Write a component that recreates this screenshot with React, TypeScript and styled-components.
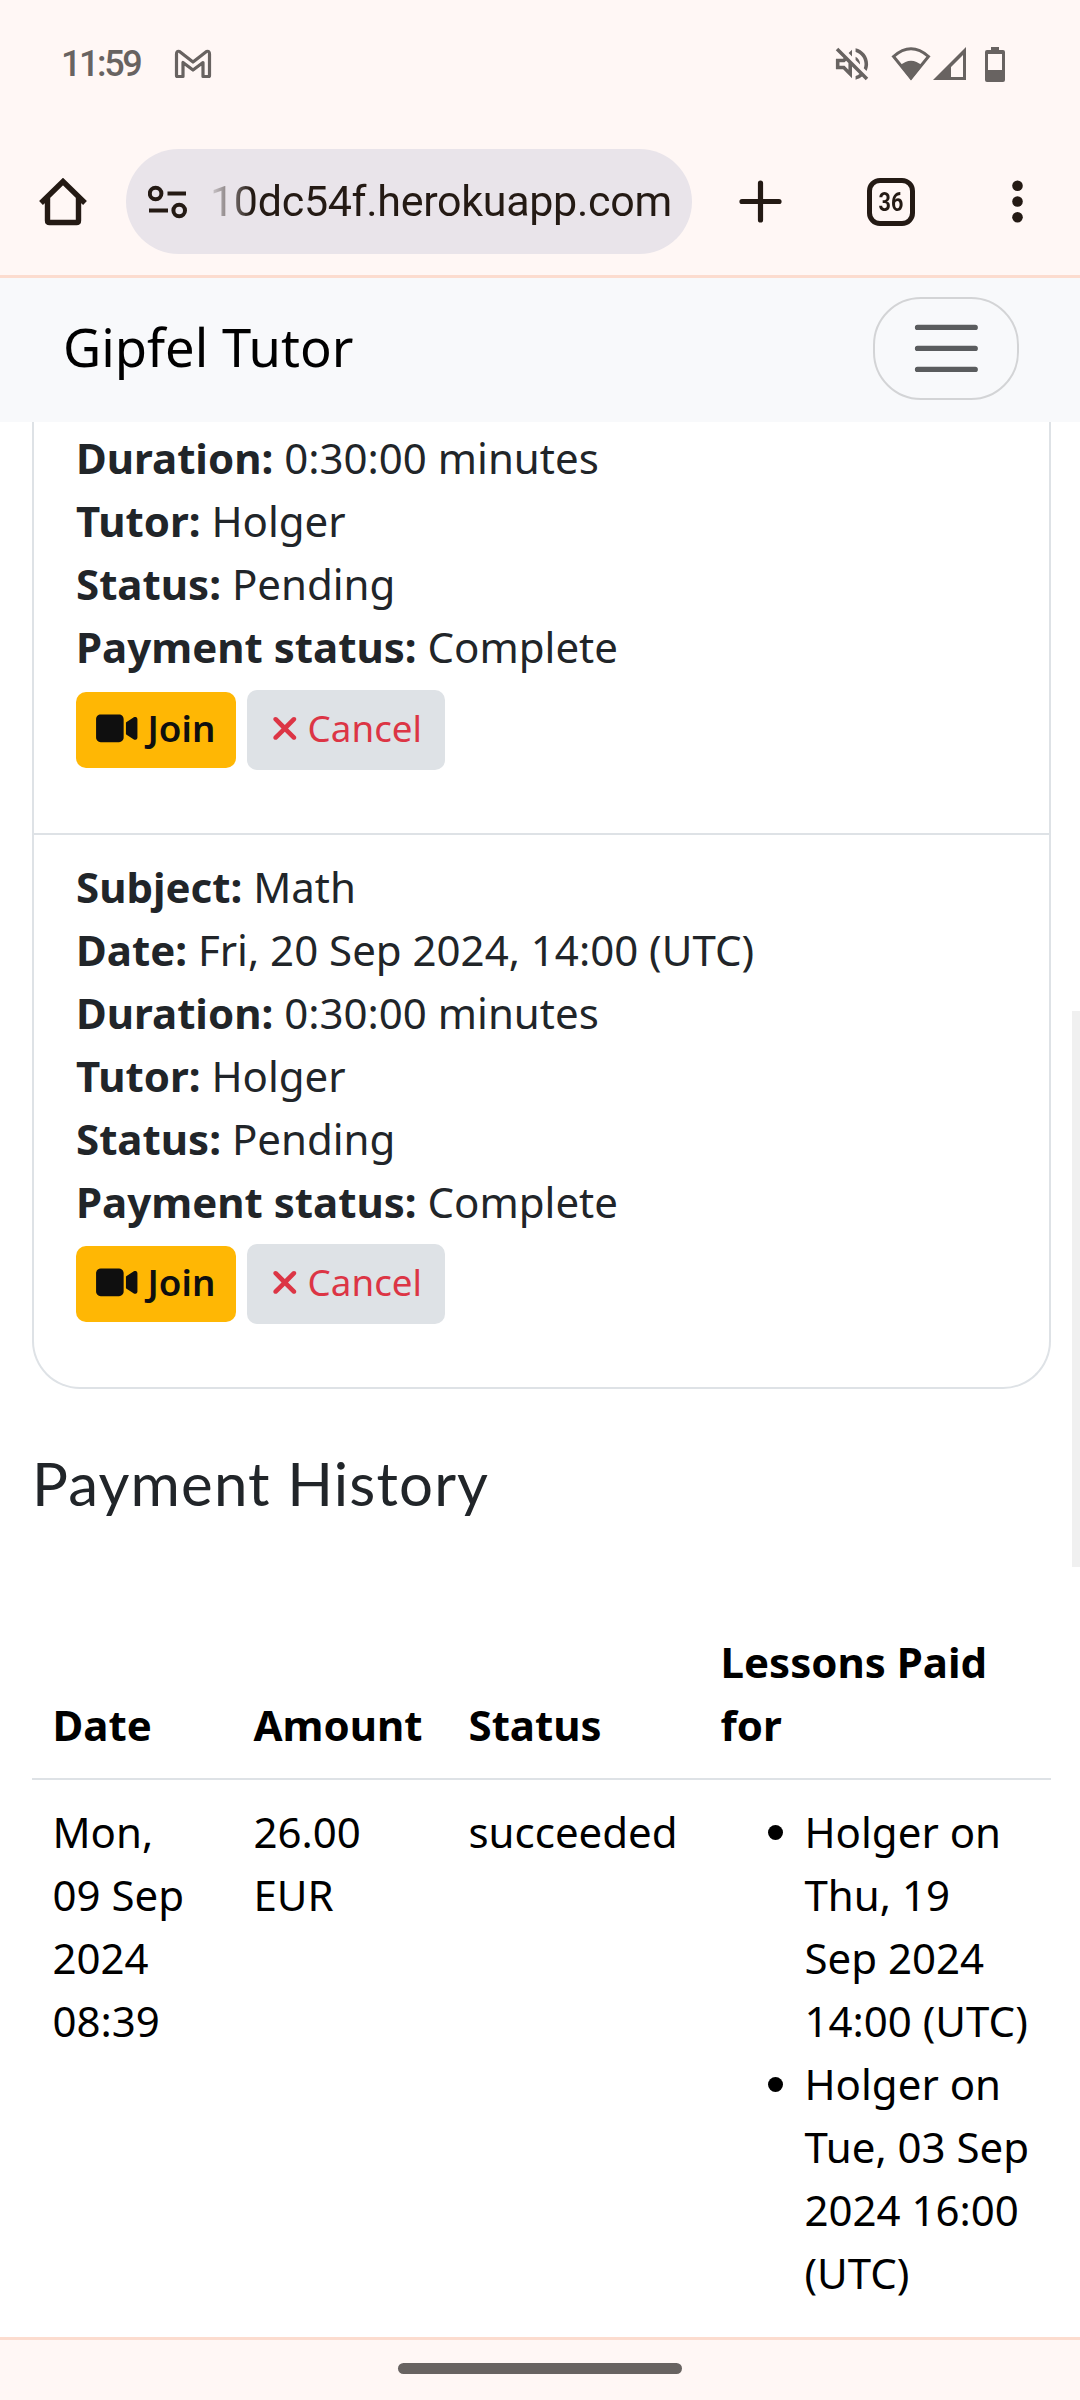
import React from "react";
import styled, { createGlobalStyle } from "styled-components";
import { FaVideo, FaXmark } from "react-icons/fa6";

const GlobalStyle = createGlobalStyle`
  * { box-sizing: border-box; }
  body {
    margin: 0;
    background: #fff;
    font-family: "Noto Sans", sans-serif;
    font-size: 42px;
    line-height: 63px;
    color: #212529;
  }
`;

const Screen = styled.div`
  position: relative;
  display: flex;
  flex-direction: column;
  width: 1080px;
  height: 2400px;
  overflow: hidden;
  background: #fff;
`;

const BrowserChrome = styled.header`
  flex: none;
  height: 278px;
  background: #fff7f5;
  border-bottom: 3px solid #fcdccf;
`;

const StatusBar = styled.div`
  display: flex;
  align-items: center;
  height: 128px;
  padding: 0 75px 0 61px;
  color: #686361;
`;

const Clock = styled.span`
  width: 113px;
  font: 500 36px/40px Roboto, sans-serif;
  letter-spacing: -2.4px;
`;

const StatusIcons = styled.div`
  display: flex;
  align-items: center;
  margin-left: auto;
`;

const StatusIcon = styled.svg<{ $gap?: number }>`
  display: block;
  margin-left: ${(p) => p.$gap ?? 0}px;
`;

const Toolbar = styled.div`
  display: flex;
  align-items: center;
  height: 147px;
  padding: 0 57px 0 39px;
  color: #241a14;
`;

const ToolIcon = styled.svg<{ $gap?: number }>`
  display: block;
  flex: none;
  margin-left: ${(p) => p.$gap ?? 0}px;
`;

const AddressPill = styled.div`
  display: flex;
  align-items: center;
  width: 566px;
  height: 105px;
  margin-left: 39px;
  padding-left: 22px;
  border-radius: 53px;
  background: #e9e4ea;
`;

const Address = styled.span`
  margin-left: 22px;
  padding-bottom: 2px;
  font: 400 43px/52px Roboto, sans-serif;
  letter-spacing: -0.3px;
  white-space: nowrap;
  color: transparent;
  background: linear-gradient(90deg, rgba(36, 26, 20, 0.1), #241a14 42px);
  background-clip: text;
  -webkit-background-clip: text;
`;

const TabCount = styled.div`
  display: flex;
  align-items: center;
  justify-content: center;
  width: 48px;
  height: 48px;
  margin-left: 85px;
  border: 5px solid #241a14;
  border-radius: 13px;
  font: 700 26px/30px Roboto, sans-serif;
`;

const TabNumber = styled.span`
  transform: scaleX(0.83);
`;

const SiteNav = styled.nav`
  display: flex;
  flex: none;
  align-items: center;
  justify-content: space-between;
  height: 144px;
  padding: 0 61px 4px 63px;
  background: #f8f9fb;
`;

const Brand = styled.span`
  padding-bottom: 3px;
  font-size: 52.5px;
  line-height: 79px;
  color: #000;
`;

const Toggler = styled.button`
  display: flex;
  align-items: center;
  justify-content: center;
  width: 146px;
  height: 103px;
  padding: 0;
  border: 2px solid #d3d4d6;
  border-radius: 48px;
  background: transparent;
`;

const Main = styled.main`
  flex: 1;
  min-height: 0;
  padding: 0 29px 0 32px;
  overflow: hidden;
`;

const LessonCard = styled.section`
  border: 2px solid #dee2e6;
  border-top: 0;
  border-radius: 0 0 48px 48px;
`;

const Lesson = styled.article`
  padding: 20px 42px 0;

  &:first-child {
    height: 413px;
    padding-top: 4px;
    border-bottom: 2px solid #dee2e6;
  }
  &:last-child {
    height: 552px;
  }
`;

const Field = styled.div`
  height: 63px;
`;

const Actions = styled.div`
  display: flex;
  align-items: center;
  gap: 11px;
  margin-top: 12px;
  height: 80px;

  ${Lesson}:last-child & {
    margin-top: 11px;
  }
`;

const ActionButton = styled.button`
  display: flex;
  align-items: center;
  border: 0;
  border-radius: 10px;
  font: 400 36.75px/55px "Noto Sans", sans-serif;

  svg {
    flex: none;
    height: 36.75px;
  }
`;

const JoinButton = styled(ActionButton)`
  gap: 10px;
  width: 160px;
  height: 76px;
  padding: 0 0 3px 20px;
  background: #ffb704;
  color: #0f0f0f;
  font-weight: 600;

  svg {
    width: 41.5px;
  }
`;

const CancelButton = styled(ActionButton)`
  gap: 9.5px;
  width: 198px;
  height: 80px;
  padding: 0 0 3px 23.5px;
  background: #dee2e6;
  color: #dc3545;

  svg {
    width: 27.6px;
  }
`;

const SectionTitle = styled.h2`
  margin: 58px 0 0 0;
  height: 72px;
  font: 400 60px/72px Lato, sans-serif;
  letter-spacing: 1.15px;
  white-space: nowrap;
`;

const PaymentTable = styled.table`
  width: 1019px;
  margin-top: 90px;
  border-collapse: collapse;
  table-layout: fixed;
  color: #000;
`;

const HeadCell = styled.th<{ $width: number }>`
  width: ${(p) => p.$width}px;
  padding: 21px 21px 22px 20.5px;
  border-bottom: 2px solid #dee2e6;
  text-align: left;
  vertical-align: bottom;
  font-weight: 700;
`;

const Cell = styled.td`
  padding: 20px 21px 21px 20.5px;
  vertical-align: top;
`;

const LessonList = styled.ul`
  margin: 0;
  padding-left: 84px;
`;

const PageScrollbar = styled.div`
  position: absolute;
  top: 1011px;
  right: 0;
  width: 8px;
  height: 556px;
  background: #f0f0f0;
`;

const GestureBar = styled.footer`
  display: flex;
  flex: none;
  justify-content: center;
  height: 63px;
  padding-top: 23px;
  border-top: 3px solid #fcdccf;
  background: #fff7f5;
`;

const GestureHandle = styled.div`
  width: 284px;
  height: 11px;
  border-radius: 6px;
  background: #686361;
`;

type FieldEntry = [label: string, value: string];

const firstLesson: FieldEntry[] = [
  ["Duration", "0:30:00 minutes"],
  ["Tutor", "Holger"],
  ["Status", "Pending"],
  ["Payment status", "Complete"],
];

const secondLesson: FieldEntry[] = [
  ["Subject", "Math"],
  ["Date", "Fri, 20 Sep 2024, 14:00 (UTC)"],
  ...firstLesson,
];

function LessonEntry({ fields }: { fields: FieldEntry[] }) {
  return (
    <Lesson>
      {fields.map(([label, value]) => (
        <Field key={label}>
          <strong>{label}:</strong> {value}
        </Field>
      ))}
      <Actions>
        <JoinButton>
          <FaVideo />
          Join
        </JoinButton>
        <CancelButton>
          <FaXmark />
          Cancel
        </CancelButton>
      </Actions>
    </Lesson>
  );
}

export default function App() {
  return (
    <Screen>
      <GlobalStyle />
      <BrowserChrome>
        <StatusBar>
          <Clock>11:59</Clock>
          <StatusIcon width="38" height="30" viewBox="0 0 38 30" fill="none" stroke="currentColor" strokeWidth="3.2" strokeLinejoin="round">
            <path d="M2.500 26.500V5Q2.500 1.500 5.500 2.500L19 13 32.500 2.500Q35.500 1.500 35.500 5V26.500Q35.500 27.500 34.500 27.500H29V13.500L19 21 9 13.500V27.500H3.500Q2.500 27.500 2.500 26.500Z" />
          </StatusIcon>
          <StatusIcons>
            <StatusIcon width="34" height="34" viewBox="2.5 2.5 19 19" fill="currentColor">
              <path d="M4.34 2.93L2.93 4.34 7.29 8.7 7 9H3v6h4l5 5v-6.59l4.18 4.18c-.65.49-1.38.88-2.18 1.11v2.06c1.34-.3 2.57-.92 3.61-1.75l2.05 2.05 1.41-1.41L4.34 2.93zM10 15.17L7.83 13H5v-2h2.83l.88-.88L10 11.41v3.76zM19 12c0 .82-.15 1.61-.41 2.34l1.53 1.53c.56-1.17.88-2.48.88-3.87 0-4.28-2.99-7.86-7-8.77v2.06c2.89.86 5 3.54 5 6.71zm-7-8l-1.88 1.88L12 7.76V4zm4.5 8c0-1.77-1.02-3.29-2.5-4.03v1.79l2.48 2.48c.01-.08.02-.16.02-.24z" />
            </StatusIcon>
            <StatusIcon $gap={22} width="40" height="34" viewBox="0 0 40 34">
              <path d="M2.500 9.500Q20-6 37.500 9.500L20 31Z" fill="none" stroke="currentColor" strokeWidth="3" />
              <path d="M9 18.500Q20 9 31 18.500L20 33Z" fill="currentColor" />
            </StatusIcon>
            <StatusIcon $gap={2} width="34" height="34" viewBox="0 0 34 34">
              <path d="M33 0V33H0ZM30 8 18 20V30H30Z" fill="currentColor" fillRule="evenodd" />
            </StatusIcon>
            <StatusIcon $gap={18} width="20" height="35" viewBox="0 0 20 35">
              <path d="M6 0H14V3H18Q20 3 20 5V33Q20 35 18 35H2Q0 35 0 33V5Q0 3 2 3H6ZM3 7V23H17V7Z" fill="currentColor" fillRule="evenodd" />
            </StatusIcon>
          </StatusIcons>
        </StatusBar>
        <Toolbar>
          <ToolIcon width="48" height="48" viewBox="0 0 48 48" fill="none" stroke="currentColor" strokeWidth="5.400">
            <path d="M2 25 24 3.500 46 25M8.500 20V42.500Q8.500 44.500 10.500 44.500H37.500Q39.500 44.500 39.500 42.500V20" />
          </ToolIcon>
          <AddressPill>
            <ToolIcon width="40" height="36" viewBox="0 0 40 36" fill="none" stroke="currentColor" strokeWidth="4">
              <circle cx="7.600" cy="9.500" r="5.800" />
              <circle cx="31.200" cy="26.500" r="5.800" />
              <path d="M19.500 9.500H38M1 26.500H20" />
            </ToolIcon>
            <Address>10dc54f.herokuapp.com</Address>
          </AddressPill>
          <ToolIcon $gap={47} width="43" height="43" viewBox="0 0 43 43" fill="none" stroke="currentColor" strokeWidth="5.200" strokeLinecap="round">
            <path d="M21.500 3V40M3 21.500H40" />
          </ToolIcon>
          <TabCount>
            <TabNumber>36</TabNumber>
          </TabCount>
          <ToolIcon $gap={97} width="11" height="43" viewBox="0 0 11 43" fill="currentColor">
            <circle cx="5.500" cy="5.700" r="5.300" />
            <circle cx="5.500" cy="21.500" r="5.300" />
            <circle cx="5.500" cy="37.300" r="5.300" />
          </ToolIcon>
        </Toolbar>
      </BrowserChrome>

      <SiteNav>
        <Brand>Gipfel Tutor</Brand>
        <Toggler aria-label="Menu">
          <svg width="78.750" height="78.750" viewBox="0 0 30 30" stroke="#5a5c5e" strokeWidth="2" strokeLinecap="round">
            <path d="M4 7h22M4 15h22M4 23h22" />
          </svg>
        </Toggler>
      </SiteNav>

      <Main>
        <LessonCard>
          <LessonEntry fields={firstLesson} />
          <LessonEntry fields={secondLesson} />
        </LessonCard>
        <SectionTitle>Payment History</SectionTitle>
        <PaymentTable>
          <thead>
            <tr>
              <HeadCell $width={201}>Date</HeadCell>
              <HeadCell $width={215}>Amount</HeadCell>
              <HeadCell $width={252}>Status</HeadCell>
              <HeadCell $width={351}>Lessons Paid for</HeadCell>
            </tr>
          </thead>
          <tbody>
            <tr>
              <Cell>Mon, 09 Sep 2024 08:39</Cell>
              <Cell>26.00 EUR</Cell>
              <Cell>succeeded</Cell>
              <Cell>
                <LessonList>
                  <li>Holger on Thu, 19 Sep 2024 14:00 (UTC)</li>
                  <li>Holger on Tue, 03 Sep 2024 16:00 (UTC)</li>
                </LessonList>
              </Cell>
            </tr>
          </tbody>
        </PaymentTable>
      </Main>

      <GestureBar>
        <GestureHandle />
      </GestureBar>
      <PageScrollbar />
    </Screen>
  );
}
